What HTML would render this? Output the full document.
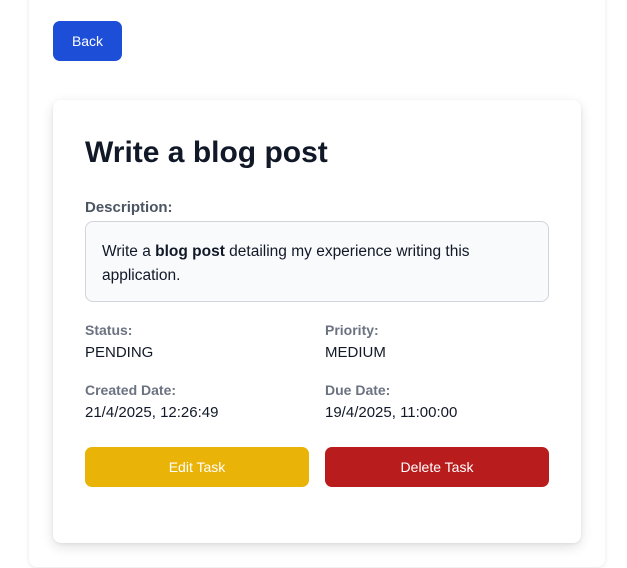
<!DOCTYPE html>
<html><head><style>
*{box-sizing:border-box;margin:0;padding:0}
body{width:627px;height:568px;background:#fff;font-family:"Liberation Sans",sans-serif;position:relative;overflow:hidden;color:#111827}
.outer{position:absolute;left:29px;top:-10px;width:576px;height:577px;background:#fff;border-radius:8px;box-shadow:0 1px 4px rgba(0,0,0,.10)}
.back{position:absolute;left:53px;top:21px;width:69px;height:40px;background:#1d4ed8;color:#fff;border-radius:7px;font-size:14px;display:flex;align-items:center;justify-content:center}
.card{position:absolute;left:53px;top:100px;width:528px;height:443px;background:#fff;border-radius:8px;box-shadow:0 4px 12px rgba(0,0,0,.12),0 1px 3px rgba(0,0,0,.06)}
.abs{position:absolute}
h1{position:absolute;left:85px;top:135px;font-size:30px;font-weight:bold;color:#111827;line-height:36px}
.lbl{font-size:14px;font-weight:bold;color:#6b7280}
.val{font-size:15px;color:#111827}
.box{position:absolute;left:85px;top:221px;width:464px;height:81px;background:#f8fafc;border:1px solid #d1d5db;border-radius:8px;padding:18px 16px;font-size:15.5px;line-height:24px}
.btn{position:absolute;top:447px;width:224px;height:40px;border-radius:7px;color:#fff;font-size:14px;display:flex;align-items:center;justify-content:center}
</style></head><body>
<div class="outer"></div>
<div class="back">Back</div>
<div class="card"></div>
<h1>Write a blog post</h1>
<div class="abs" style="left:85px;top:199px;font-size:15px;font-weight:bold;color:#4b5563">Description:</div>
<div class="box">Write a <b>blog post</b> detailing my experience writing this application.</div>
<div class="abs lbl" style="left:85px;top:322px">Status:</div>
<div class="abs val" style="left:85px;top:344px">PENDING</div>
<div class="abs lbl" style="left:325px;top:322px">Priority:</div>
<div class="abs val" style="left:325px;top:344px">MEDIUM</div>
<div class="abs lbl" style="left:85px;top:382px">Created Date:</div>
<div class="abs val" style="left:85px;top:404px">21/4/2025, 12:26:49</div>
<div class="abs lbl" style="left:325px;top:382px">Due Date:</div>
<div class="abs val" style="left:325px;top:404px">19/4/2025, 11:00:00</div>
<div class="btn" style="left:85px;background:#eab308">Edit Task</div>
<div class="btn" style="left:325px;background:#b91c1c">Delete Task</div>
</body></html>
